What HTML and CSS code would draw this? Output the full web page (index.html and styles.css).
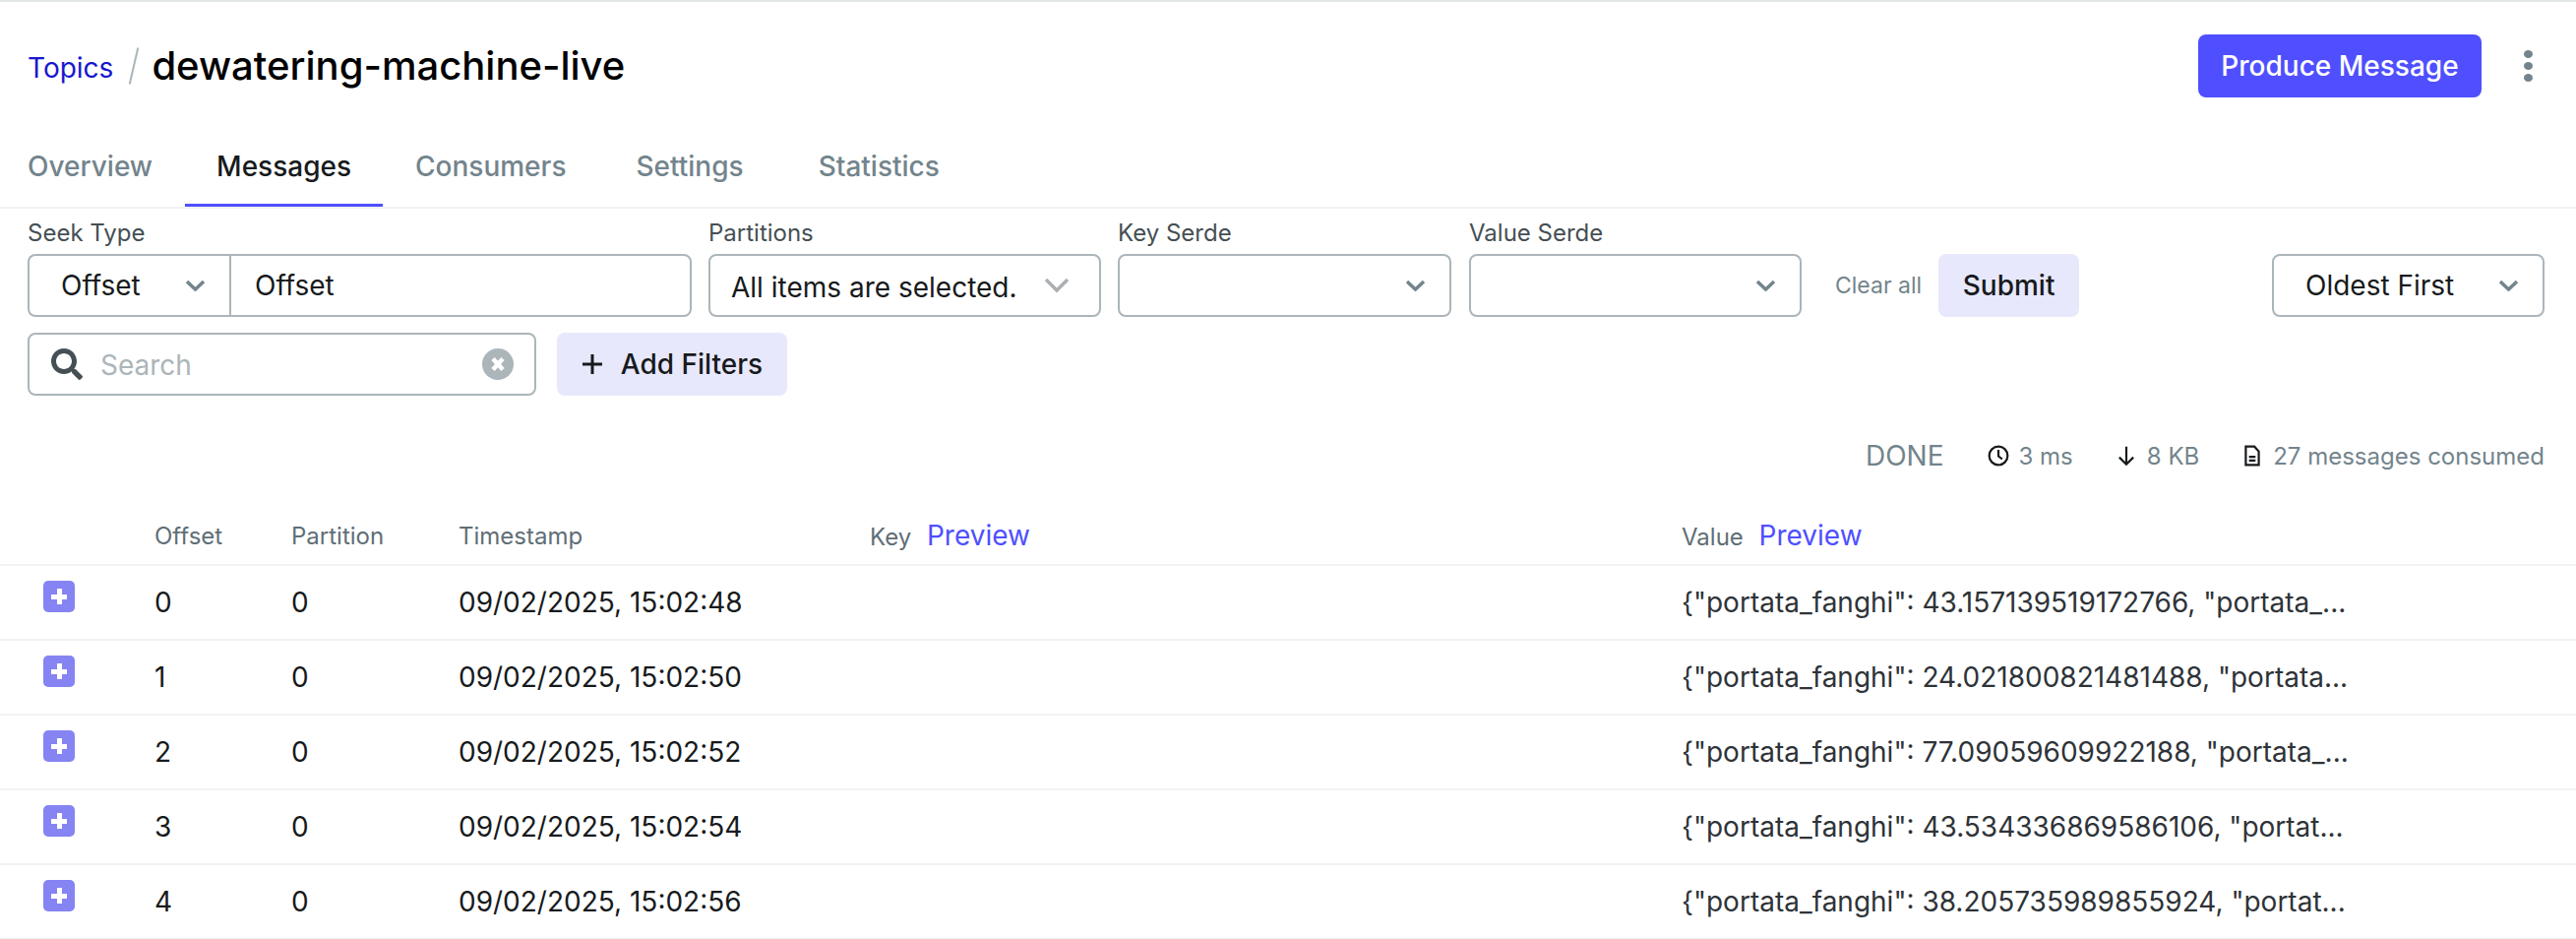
FILE: index.html
```html
<!DOCTYPE html>
<html lang="en">
<head>
    <meta charset="UTF-8">
    <title>dewatering-machine-live</title>
    <link rel="stylesheet" href="styles.css">
</head>
<body>
    <header class="page-header">
        <div class="breadcrumb">
            <a class="breadcrumb-link" href="#">Topics</a>
            <span class="breadcrumb-slash"></span>
            <h1>dewatering-machine-live</h1>
        </div>
        <div class="header-actions">
            <button class="btn-primary" type="button">Produce Message</button>
            <span class="dots"><i></i><i></i><i></i></span>
        </div>
    </header>

    <nav class="tabs">
        <a class="tab tab-first" href="#">Overview</a>
        <a class="tab tab-active" href="#">Messages</a>
        <a class="tab" href="#">Consumers</a>
        <a class="tab tab-wide" href="#">Settings</a>
        <a class="tab tab-wide" href="#">Statistics</a>
    </nav>

    <section class="filters">
        <div class="filter-row">
            <div class="field seek-field">
                <label>Seek Type</label>
                <div class="seek-group">
                    <div class="select seek-select">
                        <span>Offset</span>
                        <svg class="chevron" viewBox="0 0 21 12"><path d="M2 2 10.500 10 19 2"/></svg>
                    </div>
                    <input class="seek-input" type="text" value="Offset">
                </div>
            </div>
            <div class="field partitions-field">
                <label>Partitions</label>
                <div class="select">
                    <span class="partitions-value">All items are selected.</span>
                    <svg class="chevron-big" viewBox="0 0 26 16"><path d="M2 2 13 13 24 2"/></svg>
                </div>
            </div>
            <div class="field serde-key">
                <label>Key Serde</label>
                <div class="select select-empty">
                    <svg class="chevron" viewBox="0 0 21 12"><path d="M2 2 10.500 10 19 2"/></svg>
                </div>
            </div>
            <div class="field serde-value">
                <label>Value Serde</label>
                <div class="select select-empty">
                    <svg class="chevron" viewBox="0 0 21 12"><path d="M2 2 10.500 10 19 2"/></svg>
                </div>
            </div>
            <a class="clear-all" href="#">Clear all</a>
            <button class="btn-light btn-submit" type="button">Submit</button>
            <div class="select order-select">
                <span>Oldest First</span>
                <svg class="chevron" viewBox="0 0 21 12"><path d="M2 2 10.500 10 19 2"/></svg>
            </div>
        </div>

        <div class="search-row">
            <div class="search">
                <svg class="search-icon" viewBox="0 0 512 512"><path d="M505 442.700 405.300 343c-4.500-4.500-10.600-7-17-7H372c27.600-35.300 44-79.700 44-128C416 93.100 322.900 0 208 0S0 93.100 0 208s93.100 208 208 208c48.300 0 92.700-16.400 128-44v16.300c0 6.400 2.500 12.500 7 17l99.700 99.700c9.400 9.400 24.600 9.400 33.900 0l28.300-28.300c9.400-9.400 9.400-24.600.1-34zM208 336c-70.700 0-128-57.200-128-128 0-70.700 57.200-128 128-128 70.700 0 128 57.200 128 128 0 70.700-57.200 128-128 128z"/></svg>
                <input class="search-input" type="text" placeholder="Search">
                <svg class="search-clear" viewBox="0 0 32 32"><circle cx="16" cy="16" r="16"/><path d="M11 10.500 21 21.500M21 10.500 11 21.500"/></svg>
            </div>
            <button class="btn-light btn-filters" type="button">
                <svg class="plus-icon" viewBox="0 0 22 22"><path d="M11 1v20M1 11h20"/></svg>
                Add Filters
            </button>
        </div>
    </section>

    <div class="stats">
        <span class="stats-done">DONE</span>
        <span class="stat stat-time">
            <svg viewBox="0 0 20 20"><circle cx="10" cy="10" r="8.500"/><path d="M10 4.500V10.500L13.500 13"/></svg>
            3 ms
        </span>
        <span class="stat stat-size">
            <svg viewBox="0 0 20 20"><path d="M10 1.500V18M3.500 11.500 10 18l6.500-6.500"/></svg>
            8 KB
        </span>
        <span class="stat stat-count">
            <svg viewBox="0 0 20 20"><path d="M4 1.500h8l4 4.500v12.500H4zM7 11h6M7 14.500h6"/></svg>
            27 messages consumed
        </span>
    </div>

    <table class="messages">
        <thead>
            <tr>
                <th class="col-expand"></th>
                <th class="col-offset">Offset</th>
                <th class="col-partition">Partition</th>
                <th class="col-time">Timestamp</th>
                <th class="col-key">Key <a class="preview" href="#">Preview</a></th>
                <th>Value <a class="preview" href="#">Preview</a></th>
            </tr>
        </thead>
        <tbody>
            <tr>
                <td class="cell-expand"><button class="expand" type="button"></button></td>
                <td>0</td>
                <td>0</td>
                <td>09/02/2025, 15:02:48</td>
                <td></td>
                <td class="cell-value">{"portata_fanghi": 43.157139519172766, "portata_...</td>
            </tr>
            <tr>
                <td class="cell-expand"><button class="expand" type="button"></button></td>
                <td>1</td>
                <td>0</td>
                <td>09/02/2025, 15:02:50</td>
                <td></td>
                <td class="cell-value">{"portata_fanghi": 24.021800821481488, "portata...</td>
            </tr>
            <tr>
                <td class="cell-expand"><button class="expand" type="button"></button></td>
                <td>2</td>
                <td>0</td>
                <td>09/02/2025, 15:02:52</td>
                <td></td>
                <td class="cell-value">{"portata_fanghi": 77.09059609922188, "portata_...</td>
            </tr>
            <tr>
                <td class="cell-expand"><button class="expand" type="button"></button></td>
                <td>3</td>
                <td>0</td>
                <td>09/02/2025, 15:02:54</td>
                <td></td>
                <td class="cell-value">{"portata_fanghi": 43.534336869586106, "portat...</td>
            </tr>
            <tr>
                <td class="cell-expand"><button class="expand" type="button"></button></td>
                <td>4</td>
                <td>0</td>
                <td>09/02/2025, 15:02:56</td>
                <td></td>
                <td class="cell-value">{"portata_fanghi": 38.205735989855924, "portat...</td>
            </tr>
        </tbody>
    </table>
</body>
</html>
```

FILE: styles.css
```css
html, body {
    height: 100%;
    overflow: hidden;
}
body {
    margin: 0;
    background-color: #fff;
    color: #171a1c;
    font-family: Inter, "Liberation Sans", sans-serif;
    font-size: 28px;
    border-top: 2px solid #e3e6e8;
}
button, input {
    font-family: inherit;
    font-size: inherit;
}
a {
    text-decoration: none;
}

/* header */
.page-header {
    height: 130px;
    box-sizing: border-box;
    padding: 0 28px;
    display: flex;
    align-items: center;
    justify-content: space-between;
}
.breadcrumb {
    display: flex;
    align-items: center;
}
.breadcrumb-link {
    color: #1717cf;
    padding-top: 4px;
}
.breadcrumb-slash {
    width: 2px;
    height: 38px;
    margin: 0 17px 0 20px;
    background-color: #abb5ba;
    transform: rotate(13deg);
}
h1 {
    margin: 0 0 2px;
    font-size: 40px;
    font-weight: 500;
    color: #000;
}
.header-actions {
    display: flex;
    align-items: center;
    margin-right: 16px;
}
.btn-primary {
    width: 288px;
    height: 64px;
    padding: 0;
    border: none;
    border-radius: 8px;
    background-color: #4f4fff;
    color: #fff;
    font-weight: 500;
}
.dots {
    display: flex;
    flex-direction: column;
    gap: 4px;
    margin-left: 43px;
}
.dots i {
    width: 9px;
    height: 8px;
    border-radius: 50%;
    background-color: #73848c;
}

/* tabs */
.tabs {
    height: 80px;
    box-sizing: border-box;
    display: flex;
    padding-left: 28px;
    border-bottom: 2px solid #f1f2f3;
}
.tab {
    display: flex;
    align-items: center;
    height: 78px;
    box-sizing: border-box;
    padding: 0 33px 4px;
    color: #73848c;
    font-weight: 500;
}
.tab-first {
    padding-left: 0;
    padding-right: 33px;
}
.tab-wide {
    padding-left: 38px;
    padding-right: 38px;
}
.tab-active {
    padding: 0 32px 1px;
    color: #171a1c;
    border-bottom: 3px solid #4f4fff;
}

/* filters */
.filters {
    padding: 12px 32px 0 28px;
}
.filter-row {
    display: flex;
    align-items: flex-end;
}
.field label {
    display: block;
    height: 34px;
    line-height: 26px;
    color: #454f54;
    font-size: 24px;
}
.select {
    height: 64px;
    box-sizing: border-box;
    display: flex;
    align-items: center;
    justify-content: space-between;
    border: 2px solid #abb5ba;
    border-radius: 8px;
    padding: 0 24px 0 32px;
    background-color: #fff;
}
.seek-field {
    width: 675px;
}
.seek-group {
    display: flex;
}
.seek-select {
    width: 205px;
    border-radius: 8px 0 0 8px;
    border-right-width: 0;
}
.seek-input {
    flex: 1;
    min-width: 0;
    height: 64px;
    box-sizing: border-box;
    padding: 0 24px;
    border: 2px solid #abb5ba;
    border-radius: 0 8px 8px 0;
    color: #171a1c;
}
.partitions-field {
    width: 399px;
    margin-left: 17px;
}
.partitions-value {
    margin-left: -11px;
    padding-top: 3px;
    white-space: nowrap;
}
.serde-key {
    width: 339px;
    margin-left: 17px;
}
.serde-value {
    width: 338px;
    margin-left: 18px;
}
.select-empty {
    justify-content: flex-end;
}
.chevron {
    width: 21px;
    height: 12px;
    flex: none;
    fill: none;
    stroke: #73848c;
    stroke-width: 3.500;
}
.chevron-big {
    width: 26px;
    height: 16px;
    flex: none;
    fill: none;
    stroke: #abb0b3;
    stroke-width: 3.500;
    margin-right: 6px;
}
.clear-all {
    height: 64px;
    line-height: 64px;
    margin-left: 34px;
    color: #73848c;
    font-size: 23px;
}
.btn-light {
    height: 64px;
    border: none;
    border-radius: 8px;
    background-color: #e8e8fc;
    color: #171a1c;
    font-weight: 500;
}
.btn-submit {
    width: 143px;
    margin-left: 17px;
    padding: 0;
}
.order-select {
    width: 277px;
    margin-left: auto;
}
.search-row {
    display: flex;
    gap: 21px;
    margin-top: 16px;
}
.search {
    width: 517px;
    height: 64px;
    box-sizing: border-box;
    display: flex;
    align-items: center;
    border: 2px solid #abb5ba;
    border-radius: 8px;
    padding: 0 21px 0 22px;
}
.search-icon {
    width: 32px;
    height: 32px;
    flex: none;
    fill: #454f54;
}
.search-input {
    flex: 1;
    min-width: 0;
    border: none;
    outline: none;
    padding: 2px 0 0 18px;
}
.search-input::placeholder {
    color: #abb5ba;
}
.search-clear {
    width: 32px;
    height: 32px;
    flex: none;
}
.search-clear circle {
    fill: #abb5ba;
}
.search-clear path {
    fill: none;
    stroke: #fff;
    stroke-width: 4.500;
}
.btn-filters {
    width: 234px;
    display: flex;
    align-items: center;
    justify-content: center;
    gap: 18px;
    padding: 0;
}
.plus-icon {
    width: 22px;
    height: 22px;
    fill: none;
    stroke: #171a1c;
    stroke-width: 3;
}

/* stats line */
.stats {
    display: flex;
    align-items: center;
    justify-content: flex-end;
    height: 48px;
    margin-top: 37px;
    padding-right: 32px;
    color: #73848c;
    font-size: 24px;
}
.stats-done {
    font-size: 28px;
    margin-right: 44px;
}
.stat {
    display: flex;
    align-items: center;
    gap: 10px;
    margin-right: 43px;
}
.stat:last-child {
    margin-right: 0;
}
.stat svg {
    width: 22px;
    height: 22px;
    fill: none;
    stroke: #171a1c;
    stroke-width: 2;
}

/* messages table */
.messages {
    width: 100%;
    margin-top: 28px;
    border-collapse: collapse;
    table-layout: fixed;
}
.messages th {
    height: 59px;
    padding: 0 0 0 16px;
    box-sizing: border-box;
    text-align: left;
    color: #5f6e76;
    font-size: 24px;
    font-weight: 400;
    border-bottom: 2px solid #f1f2f3;
}
.col-expand { width: 141px; }
.col-offset { width: 139px; }
.col-partition { width: 170px; }
.col-time { width: 418px; }
.col-key { width: 825px; }
.preview {
    color: #4f4fff;
    font-size: 28px;
    margin-left: 9px;
}
.messages td {
    height: 76px;
    padding: 0 0 0 16px;
    box-sizing: border-box;
    border-bottom: 2px solid #f1f2f3;
}
.messages .cell-expand {
    padding-left: 44px;
    padding-bottom: 12px;
    vertical-align: middle;
}
.expand {
    display: block;
    width: 32px;
    height: 32px;
    padding: 0;
    border: none;
    border-radius: 5px;
    background-color: #8584f2;
    background-image: linear-gradient(#fff, #fff), linear-gradient(#fff, #fff);
    background-size: 16px 5px, 5px 16px;
    background-position: center;
    background-repeat: no-repeat;
}
.messages .cell-value {
    color: #2e3338;
}
```
